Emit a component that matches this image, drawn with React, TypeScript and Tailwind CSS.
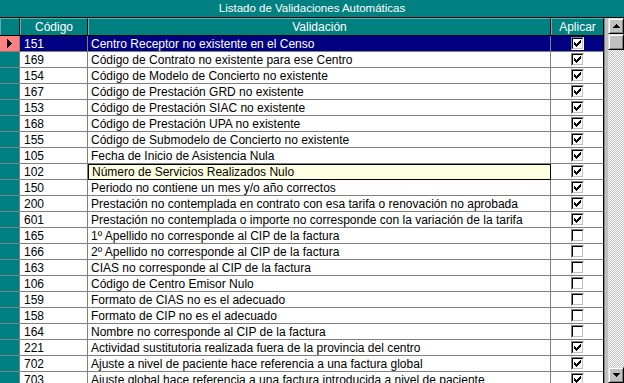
import React from "react";

type Row = { code: string; text: string; on: boolean };

const rows: Row[] = [
  { code: "151", text: "Centro Receptor no existente en el Censo", on: true },
  { code: "169", text: "Código de Contrato no existente para ese Centro", on: true },
  { code: "154", text: "Código de Modelo de Concierto no existente", on: true },
  { code: "167", text: "Código de Prestación GRD no existente", on: true },
  { code: "153", text: "Código de Prestación SIAC no existente", on: true },
  { code: "168", text: "Código de Prestación UPA no existente", on: true },
  { code: "155", text: "Código de Submodelo de Concierto no existente", on: true },
  { code: "105", text: "Fecha de Inicio de Asistencia Nula", on: true },
  { code: "102", text: "Número de Servicios Realizados Nulo", on: true },
  { code: "150", text: "Periodo no contiene un mes y/o año correctos", on: true },
  { code: "200", text: "Prestación no contemplada en contrato con esa tarifa o renovación no aprobada", on: true },
  { code: "601", text: "Prestación no contemplada o importe no corresponde con la variación de la tarifa", on: true },
  { code: "165", text: "1º Apellido no corresponde al CIP de la factura", on: false },
  { code: "166", text: "2º Apellido no corresponde al CIP de la factura", on: false },
  { code: "163", text: "CIAS no corresponde al CIP de la factura", on: false },
  { code: "106", text: "Código de Centro Emisor Nulo", on: false },
  { code: "159", text: "Formato de CIAS no es el adecuado", on: false },
  { code: "158", text: "Formato de CIP no es el adecuado", on: false },
  { code: "164", text: "Nombre no corresponde al CIP de la factura", on: false },
  { code: "221", text: "Actividad sustitutoria realizada fuera de la provincia del centro", on: true },
  { code: "702", text: "Ajuste a nivel de paciente hace referencia a una factura global", on: true },
  { code: "703", text: "Ajuste global hace referencia a una factura introducida a nivel de paciente", on: true },
];

// win95 style check pixels
const checkPx = [
  [6, 0],
  [5, 1], [6, 1],
  [0, 2], [4, 2], [5, 2], [6, 2],
  [0, 3], [1, 3], [3, 3], [4, 3], [5, 3],
  [0, 4], [1, 4], [2, 4], [3, 4], [4, 4],
  [1, 5], [2, 5], [3, 5],
  [2, 6],
];

const CheckBox = ({ on }: { on: boolean }) => (
  <div className="w-[13px] h-[13px] bg-white border border-t-[#808080] border-l-[#808080] border-r-white border-b-white">
    <div className="w-full h-full border border-t-black border-l-black border-r-[#c0c0c0] border-b-[#c0c0c0] flex items-center justify-center">
      {on && (
        <svg width="7" height="7" viewBox="0 0 7 7" shapeRendering="crispEdges">
          {checkPx.map(([x, y]) => (
            <rect key={`${x}-${y}`} x={x} y={y} width="1" height="1" fill="#000" />
          ))}
        </svg>
      )}
    </div>
  </div>
);

const ScrollBtn = ({ up }: { up: boolean }) => (
  <div className="w-[16px] h-[16px] bg-[#c0c0c0] border border-t-[#dfdfdf] border-l-[#dfdfdf] border-r-black border-b-black shadow-[inset_1px_1px_#fff,inset_-1px_-1px_#808080] flex items-center justify-center">
    <svg width="7" height="4" viewBox="0 0 7 4" shapeRendering="crispEdges">
      {up ? (
        <path d="M3 0h1v1h1v1h1v1h1v1H0V3h1V2h1V1h1z" fill="#000" />
      ) : (
        <path d="M0 0h7v1H6v1H5v1H4v1H3V3H2V2H1V1H0z" fill="#000" />
      )}
    </svg>
  </div>
);

const Thumb = () => (
  <div className="w-[16px] h-[16px] bg-[#c0c0c0] border border-t-[#dfdfdf] border-l-[#dfdfdf] border-r-black border-b-black shadow-[inset_1px_1px_#fff,inset_-1px_-1px_#808080]" />
);

const headCell =
  "h-full flex items-center justify-center text-white bg-[#008080] border-t border-l border-t-[#5fb0b0] border-l-[#5fb0b0] border-r border-r-black";

export default function App() {
  return (
    <div className="w-[624px] h-[383px] overflow-hidden bg-[#c0c0c0] flex flex-col font-['Liberation_Sans',Arial,sans-serif] text-[12px] leading-none">
      <div className="h-[18px] shrink-0 bg-[#008080] border-b border-black text-white text-[11.5px] flex items-center justify-center">
        Listado de Validaciones Automáticas
      </div>
      <div className="flex flex-1 min-h-0">
        <div className="w-[604px] flex flex-col bg-white">
          <div className="h-[18px] shrink-0 flex border-b border-black">
            <div className={`w-[20px] ${headCell}`} />
            <div className={`w-[68px] ${headCell}`}>Código</div>
            <div className={`w-[463px] ${headCell}`}>Validación</div>
            <div className={`w-[53px] ${headCell}`}>Aplicar</div>
          </div>
          {rows.map((r, i) => {
            const sel = i === 0;
            const edit = i === 8;
            return (
              <div key={r.code} className="h-[16px] shrink-0 flex">
                <div
                  className={`w-[20px] border-r border-b border-[#808080] flex items-center justify-center ${
                    sel ? "bg-[#ff8080]" : "bg-[#008080]"
                  }`}
                >
                  {sel && (
                    <svg width="5" height="9" viewBox="0 0 5 9" shapeRendering="crispEdges">
                      <path d="M0 0h1v1h1v1h1v1h1v1h1v1H4v1H3v1H2v1H1v1H0z" fill="#000" />
                    </svg>
                  )}
                </div>
                <div
                  className={`w-[68px] border-r border-b border-[#808080] flex items-center pl-[4px] ${
                    sel ? "bg-[#000080] text-white" : "text-black"
                  }`}
                >
                  {r.code}
                </div>
                <div
                  className={`w-[463px] flex items-center pl-[3px] whitespace-nowrap overflow-hidden ${
                    sel
                      ? "bg-[#000080] text-white border-r border-b border-[#808080]"
                      : edit
                      ? "bg-[#ffffe1] text-black border border-black"
                      : "text-black border-r border-b border-[#808080]"
                  }`}
                >
                  {r.text}
                </div>
                <div
                  className={`w-[53px] border-r border-r-black border-b border-b-[#808080] flex items-center justify-center ${
                    sel ? "bg-[#000080]" : ""
                  }`}
                >
                  <CheckBox on={r.on} />
                </div>
              </div>
            );
          })}
        </div>
        <div className="w-[20px] flex flex-col items-end bg-[#c0c0c0] border-l border-l-[#808080]">
          <ScrollBtn up={true} />
          <Thumb />
          <div className="w-[16px] flex-1 bg-[repeating-conic-gradient(#c0c0c0_0_25%,#ffffff_0_50%)] bg-[length:2px_2px]" />
          <ScrollBtn up={false} />
        </div>
      </div>
    </div>
  );
}
